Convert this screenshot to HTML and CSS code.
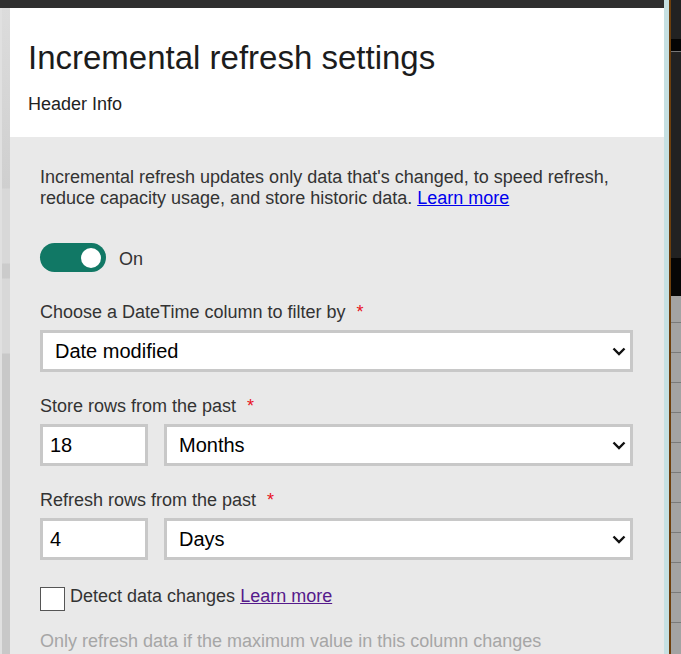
FILE: index.html
```html
<!DOCTYPE html>
<html lang="en">
<head>
  <meta charset="UTF-8" />
  <meta name="viewport" content="width=device-width, initial-scale=1.0" />
  <title>Incremental refresh settings</title>
  <link rel="stylesheet" href="styles.css">
</head>
<body>
  <div class="screen">
    <div class="workspace">
      <div class="topbar"></div>
      <div class="workspace-body">
        <div class="side-strip"></div>

        <section class="panel">
          <header class="panel-header">
            <h1>Incremental refresh settings</h1>
            <p class="header-info">Header Info</p>
          </header>

          <div class="panel-body">
            <p class="intro">
              Incremental refresh updates only data that's changed, to speed refresh,
              reduce capacity usage, and store historic data. <a href="#" class="link">Learn more</a>
            </p>

            <div class="toggle-row">
              <span class="toggle"><span class="knob"></span></span>
              <span class="toggle-label">On</span>
            </div>

            <div class="field">
              <div class="field-label">Choose a DateTime column to filter by <span class="req">*</span></div>
              <div class="select">
                <span>Date modified</span>
                <svg width="14" height="9" viewBox="0 0 14 9"><path d="M1.5 1.5 L7 7 L12.5 1.5" fill="none" stroke="#111" stroke-width="2.4"/></svg>
              </div>
            </div>

            <div class="field">
              <div class="field-label">Store rows from the past <span class="req">*</span></div>
              <div class="field-row">
                <div class="num">18</div>
                <div class="select">
                  <span>Months</span>
                  <svg width="14" height="9" viewBox="0 0 14 9"><path d="M1.5 1.5 L7 7 L12.5 1.5" fill="none" stroke="#111" stroke-width="2.4"/></svg>
                </div>
              </div>
            </div>

            <div class="field">
              <div class="field-label">Refresh rows from the past <span class="req">*</span></div>
              <div class="field-row">
                <div class="num">4</div>
                <div class="select">
                  <span>Days</span>
                  <svg width="14" height="9" viewBox="0 0 14 9"><path d="M1.5 1.5 L7 7 L12.5 1.5" fill="none" stroke="#111" stroke-width="2.4"/></svg>
                </div>
              </div>
            </div>

            <div class="check-row">
              <span class="checkbox"></span>
              <span class="check-label">Detect data changes <a href="#" class="link visited">Learn more</a></span>
            </div>

            <p class="hint">Only refresh data if the maximum value in this column changes</p>
          </div>
        </section>
      </div>
    </div>

    <div class="edge-teal"></div>
    <div class="edge-brown"></div>
    <div class="behind">
      <div class="behind-top"></div>
      <div class="behind-block"></div>
      <div class="behind-dark"></div>
      <div class="behind-black"></div>
      <div class="behind-grid"></div>
    </div>
  </div>
</body>
</html>
```

FILE: styles.css
```css
html, body {
  margin: 0;
  height: 100%;
  overflow: hidden;
}
body {
  font-family: "Liberation Sans", Arial, sans-serif;
  background: #e9e9e9;
}
.screen {
  display: flex;
  height: 654px;
}
.workspace {
  width: 664px;
  display: flex;
  flex-direction: column;
}
.topbar {
  height: 8px;
  background: #2f2f2f;
}
.workspace-body {
  flex: 1;
  display: flex;
  min-height: 0;
}
.side-strip {
  width: 8px;
  border-left: 2px solid #e0e0e0;
  background: linear-gradient(to bottom, #dcdcdc 0, #cfcfcf 180px, #d8d8d8 181px, #d8d8d8 255px, #cbcbcb 256px, #cbcbcb 270px, #d8d8d8 271px, #d8d8d8 345px, #c8c8c8 346px);
}
.panel {
  flex: 1;
  background: #e9e9e9;
  overflow: hidden;
}
.panel-header {
  background: #fff;
  padding: 30px 18px 22px 18px;
}
.panel-header h1 {
  margin: 0;
  font-size: 33px;
  font-weight: normal;
  line-height: 40px;
  color: #1c1c1c;
}
.header-info {
  margin: 15px 0 0;
  font-size: 18px;
  line-height: 22px;
  color: #222;
}
.panel-body {
  padding: 30px 31px 0 30px;
  color: #333;
  font-size: 18px;
}
.intro {
  margin: 0;
  line-height: 21px;
}
.link {
  color: #0000ee;
}
.link.visited {
  color: #551a8b;
}
.toggle-row {
  display: flex;
  align-items: center;
  gap: 13px;
  margin-top: 34px;
  height: 29px;
}
.toggle {
  width: 66px;
  height: 29px;
  border-radius: 15px;
  background: #117865;
  display: flex;
  align-items: center;
  justify-content: flex-end;
  padding-right: 5px;
  box-sizing: border-box;
}
.knob {
  width: 20px;
  height: 20px;
  border-radius: 50%;
  background: #fff;
}
.toggle-label {
  line-height: 22px;
  margin-top: 2px;
}
.field {
  margin-top: 29px;
}
.field + .field {
  margin-top: 23px;
}
.field-label {
  line-height: 22px;
  margin-bottom: 7px;
}
.req {
  color: #e81123;
  margin-left: 6px;
}
.field-row {
  display: flex;
  gap: 16px;
}
.select, .num {
  height: 42px;
  box-sizing: border-box;
  border: 3px solid #c8c8c8;
  background: #fff;
  color: #000;
  font-size: 20px;
  display: flex;
  align-items: center;
}
.select {
  flex: 1;
  justify-content: space-between;
  padding: 0 4px 0 12px;
}
.num {
  width: 108px;
  padding-left: 7px;
}
.check-row {
  display: flex;
  align-items: center;
  gap: 5px;
  margin-top: 26px;
}
.check-label {
  margin-bottom: 4px;
}
.checkbox {
  width: 25px;
  height: 24px;
  box-sizing: border-box;
  border: 1px solid #555;
  background: #fff;
}
.hint {
  margin: 19px 0 0;
  line-height: 22px;
  color: #a6a6a6;
}
.edge-teal {
  width: 5px;
  background: #c6e0e2;
}
.edge-brown {
  width: 2px;
  background: #6e3f0c;
}
.behind {
  flex: 1;
  display: flex;
  flex-direction: column;
}
.behind-top {
  height: 39px;
  background: #222;
}
.behind-block {
  height: 12px;
  background: #050505;
  border-bottom: 1px solid #777;
}
.behind-dark {
  height: 206px;
  background: #222;
}
.behind-black {
  height: 38px;
  background: #060606;
}
.behind-grid {
  flex: 1;
  background-color: #a3a3a3;
  background-image: repeating-linear-gradient(to bottom, transparent 0, transparent 29px, #7a7a7a 29px, #7a7a7a 30px);
  background-position: 0 -3px;
}
```
